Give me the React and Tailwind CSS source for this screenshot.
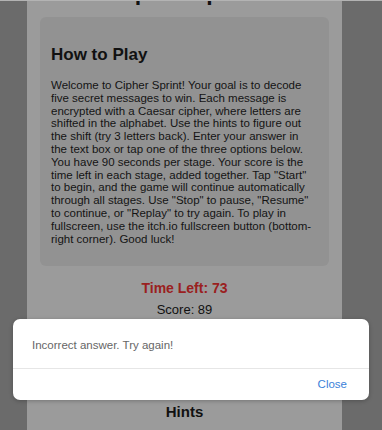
import React from 'react';

const howTo =
  'Welcome to Cipher Sprint! Your goal is to decode five secret messages to win. Each message is encrypted with a Caesar cipher, where letters are shifted in the alphabet. Use the hints to figure out the shift (try 3 letters back). Enter your answer in the text box or tap one of the three options below. You have 90 seconds per stage. Your score is the time left in each stage, added together. Tap "Start" to begin, and the game will continue automatically through all stages. Use "Stop" to pause, "Resume" to continue, or "Replay" to try again. To play in fullscreen, use the itch.io fullscreen button (bottom-right corner). Good luck!';

export default function App() {
  return (
    <div className="relative h-[430px] w-[382px] overflow-hidden bg-[#6b6b6b] font-['Liberation_Sans',Arial,sans-serif] text-[#111]">
      {/* top edge */}
      <div className="h-[1px] w-full bg-[#b3b3b3]" />

      {/* game column (dimmed by the alert) */}
      <div className="ml-[27px] flex h-full w-[315px] flex-col overflow-hidden bg-[#9b9b9b]">
        <h1 className="-mt-[22px] text-center text-[23px] font-bold leading-[26px]">Cipher Sprint</h1>

        <div className="mx-[13px] mt-[12px] rounded-[6px] bg-[#929292] px-[11px] pb-[21px] pt-[28px]">
          <h2 className="text-[17px] font-bold leading-[19px]">How to Play</h2>
          <p className="mt-[15px] w-[263px] text-[11.5px] leading-[12.8px] text-[#141414]">{howTo}</p>
        </div>

        <div className="mt-[14px] text-center text-[14px] font-bold leading-[16px] text-[#9a2020]">Time Left: 73</div>
        <div className="mt-[6px] text-center text-[13px] leading-[15px]">Score: 89</div>

        <div className="h-[86px]" />
        <h3 className="text-center text-[15px] font-bold leading-[18px]">Hints</h3>
      </div>

      {/* alert */}
      <div className="absolute left-[13px] top-[319px] flex w-[356px] flex-col rounded-[7px] bg-white shadow-[0_1px_4px_rgba(0,0,0,0.25)]">
        <div className="flex h-[49px] items-center pl-[19px] pt-[5px] text-[11.5px] text-[#666]">
          Incorrect answer. Try again!
        </div>
        <div className="h-[1px] bg-[#e6e6e6]" />
        <div className="flex h-[31px] items-center justify-end pr-[22px] text-[11.5px] text-[#3b7fd9]">
          Close
        </div>
      </div>
    </div>
  );
}
